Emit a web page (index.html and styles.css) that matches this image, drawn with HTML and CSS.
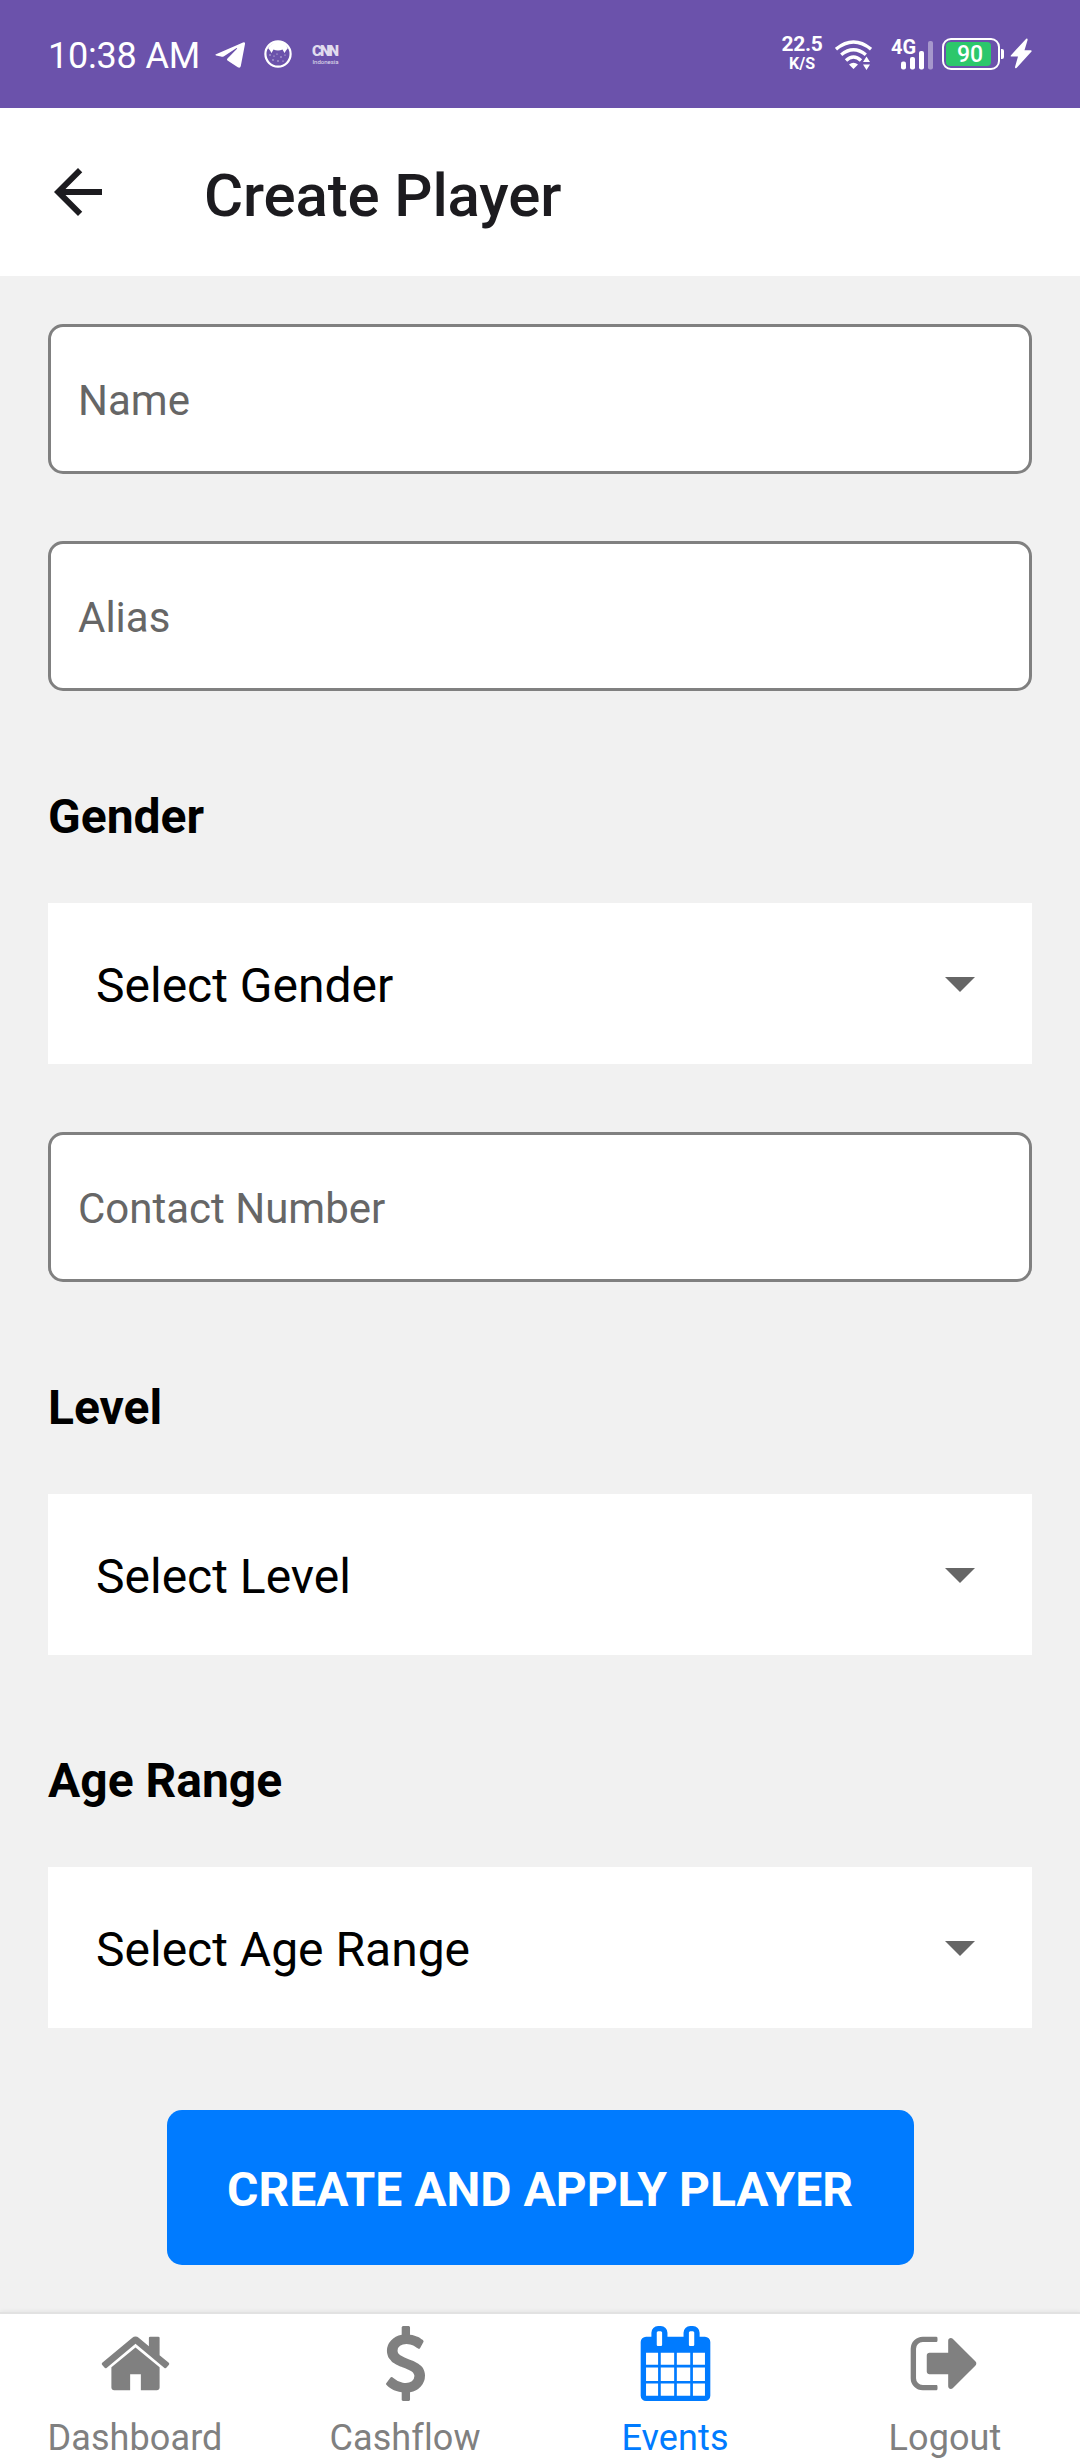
FILE: index.html
```html
<!DOCTYPE html>
<html lang="en">
<head>
<meta charset="utf-8">
<title>Create Player</title>
<link rel="stylesheet" href="styles.css">
</head>
<body>
<div class="screen">
  <div class="status">
    <div class="status-left">
      <span class="clock">10:38 AM</span>
      <svg class="telegram" width="30" height="27" viewBox="0 0 30 27"><path fill="#fff" d="M1 12.200 28 .5q2.400-.7 2 1.500L25.800 24q-.6 2.700-3 1.300L12.500 18.500q-1-1 0-2l9.500-9.700q.4-1-.8-.6L9 14.200q-1.500.9-3 .4L1 13.400q-1.200-.6 0-1.200z"/></svg>
      <svg class="face" width="28" height="28" viewBox="0 0 28 28"><circle cx="14" cy="14" r="12.600" fill="none" stroke="#fff" stroke-width="2.200"/><path fill="#fff" d="M4 8Q8 2 14 1.500T24 8L22 10.500 20.500 13 18.500 9.500q-4.500 2-9 0L7.500 13 6 10.500z"/><g fill="#fff" opacity=".8"><circle cx="6" cy="15" r=".7"/><circle cx="10" cy="16" r=".6"/><circle cx="13" cy="14" r=".6"/><circle cx="17" cy="17" r=".7"/><circle cx="21" cy="15" r=".6"/><circle cx="14" cy="21" r=".7"/><circle cx="19" cy="21" r=".6"/><circle cx="9" cy="20" r=".7"/></g></svg>
      <span class="cnn"><b>CNN</b><i>Indonesia</i></span>
    </div>
    <div class="status-right">
      <div class="speed"><span class="rate">22.5</span><span class="unit">K/S</span></div>
      <svg class="wifi" width="37" height="31" viewBox="0 0 37 31"><g fill="none" stroke="#fff" stroke-width="3.400"><path d="M1 9.200Q18.500-5 36 9.200"/><path d="M6.200 14.800Q18.500 4.800 30.800 14.800"/><path d="M11 20.400Q18.500 13.500 26 20.400"/></g><path fill="#fff" d="M14 24.500q4.500-3.500 9 0L18.500 29zM28 22l3.500-5.500L35 22zM28 24.500h7L31.500 30z"/></svg>
      <div class="cell"><span class="net">4G</span>
        <svg class="bars" width="33" height="30" viewBox="0 0 33 30"><g fill="#fff"><rect x="0" y="21.500" width="5" height="8" rx="2"/><rect x="9" y="17" width="5" height="12.500" rx="2"/><rect x="18" y="11" width="5" height="18.500" rx="2"/><rect x="27" y="1" width="5" height="28.500" rx="2" opacity=".4"/></g></svg>
      </div>
      <div class="battery"><span class="charge">90</span></div>
      <i class="nub"></i>
      <svg class="bolt" width="22" height="31" viewBox="0 0 22 31"><path fill="#fff" d="M16.200.7 1 17.200q-1 1.200.6 1.300H8L5 29q0 2 1.500 1L21.300 13.800q1-1.300-.6-1.500H14.500L17.600 2q.1-2-1.400-1.300z"/></svg>
    </div>
  </div>

  <header class="appbar">
    <svg class="back" width="72" height="72" viewBox="0 0 24 24"><path fill="#1c1b1f" d="M20 11H7.830l5.590-5.590L12 4l-8 8 8 8 1.410-1.410L7.830 13H20z"/></svg>
    <h1 class="title">Create Player</h1>
  </header>

  <main class="form">
    <input class="field" placeholder="Name">
    <input class="field" placeholder="Alias">
    <div class="group">
      <h2 class="label">Gender</h2>
      <div class="select"><span>Select Gender</span><svg width="30" height="15" viewBox="0 0 30 15"><path fill="#666" d="M0 0h30L15 15z"/></svg></div>
    </div>
    <input class="field" placeholder="Contact Number">
    <div class="group">
      <h2 class="label">Level</h2>
      <div class="select"><span>Select Level</span><svg width="30" height="15" viewBox="0 0 30 15"><path fill="#666" d="M0 0h30L15 15z"/></svg></div>
    </div>
    <div class="group">
      <h2 class="label">Age Range</h2>
      <div class="select"><span>Select Age Range</span><svg width="30" height="15" viewBox="0 0 30 15"><path fill="#666" d="M0 0h30L15 15z"/></svg></div>
    </div>
    <button class="submit">CREATE AND APPLY PLAYER</button>
  </main>

  <nav class="tabs">
    <a class="tab"><svg viewBox="0 0 1792 1792"><path d="M1472 992v480q0 26-19 45t-45 19h-384v-384h-256v384h-384q-26 0-45-19t-19-45v-480q0-1 .5-3t.5-3l575-474 575 474q1 2 1 6zm223-69l-62 74q-8 9-21 11h-3q-13 0-21-7l-692-577-692 577q-12 8-24 7-13-2-21-11l-62-74q-8-10-7-23.500t11-21.500l719-599q32-26 76-26t76 26l244 204v-195q0-14 9-23t23-9h192q14 0 23 9t9 23v408l219 182q10 8 11 21.500t-7 23.500z"/></svg><span>Dashboard</span></a>
    <a class="tab"><svg viewBox="0 0 1792 1792"><path d="M1362 1185q0 153-99.500 263.500t-258.500 136.500v175q0 14-9 23t-23 9h-135q-13 0-22.500-9.500t-9.500-22.500v-175q-66-9-127.500-31t-101.500-44.500-74-48-46.500-37.500-17.500-18q-17-21-2-41l103-135q7-10 23-12 15-2 24 9l2 2q113 99 243 125 37 8 74 8 81 0 142.500-43t61.500-122q0-28-15-53t-33.500-42-58.500-37.500-66-32-80-32.500q-39-16-61.500-25t-61.500-26.500-62.500-31-56.500-35.500-53.500-42.500-43.500-49-35.500-58-21-66.500-8.500-78q0-138 98-242t255-134v-180q0-13 9.500-22.500t22.500-9.500h135q14 0 23 9t9 23v176q57 6 110.500 23t87 33.500 63.500 37.500 39 29 15 14q17 18 5 38l-81 146q-8 15-23 16-14 3-27-7-3-3-14.500-12t-39-26.500-58.500-32-74.500-26-85.500-11.500q-95 0-155 43t-60 111q0 26 8.500 48t29.500 41.500 39.500 33 56 31 60.500 27 70 27.500q53 20 81 31.500t76 35 75.500 42.500 62 50 53 63.500 31.500 76.500 13 94z"/></svg><span>Cashflow</span></a>
    <a class="tab active"><svg viewBox="0 0 1792 1792"><path d="M192 1664h288v-288h-288v288zm352 0h320v-288h-320v288zm-352-352h288v-320h-288v320zm352 0h320v-320h-320v320zm-352-384h288v-288h-288v288zm736 736h320v-288h-320v288zm-384-736h320v-288h-320v288zm768 736h288v-288h-288v288zm-384-352h320v-320h-320v320zm-352-864v-288q0-13-9.500-22.500t-22.500-9.500h-64q-13 0-22.500 9.500t-9.500 22.500v288q0 13 9.500 22.500t22.500 9.500h64q13 0 22.500-9.500t9.500-22.500zm736 864h288v-320h-288v320zm-384-384h320v-288h-320v288zm384 0h288v-288h-288v288zm32-480v-288q0-13-9.500-22.500t-22.500-9.500h-64q-13 0-22.500 9.500t-9.500 22.500v288q0 13 9.500 22.500t22.500 9.500h64q13 0 22.500-9.500t9.500-22.500zm384-64v1280q0 52-38 90t-90 38h-1408q-52 0-90-38t-38-90v-1280q0-52 38-90t90-38h128v-96q0-66 47-113t113-47h64q66 0 113 47t47 113v96h384v-96q0-66 47-113t113-47h64q66 0 113 47t47 113v96h128q52 0 90 38t38 90z"/></svg><span>Events</span></a>
    <a class="tab"><svg viewBox="0 0 1792 1792"><path d="M704 1440q0 4 1 20t.5 26.500-3 23.500-10 19.500-20.500 6.500h-320q-119 0-203.500-84.500t-84.500-203.500v-704q0-119 84.500-203.500t203.500-84.500h320q13 0 22.500 9.500t9.500 22.500q0 4 1 20t.5 26.500-3 23.500-10 19.500-20.500 6.500h-320q-66 0-113 47t-47 113v704q0 66 47 113t113 47h312l11.500 1 11.500 3 8 5.500 7 9 2 13.500zm928-544q0 26-19 45l-544 544q-19 19-45 19t-45-19-19-45v-288h-448q-26 0-45-19t-19-45v-384q0-26 19-45t45-19h448v-288q0-26 19-45t45-19 45 19l544 544q19 19 19 45z"/></svg><span>Logout</span></a>
  </nav>
</div>
</body>
</html>
```
FILE: styles.css
```css
* { box-sizing: border-box; }
body { margin: 0; font-family: Roboto, sans-serif; background: #f1f1f1; }
svg { display: block; flex: none; }
.screen { width: 1080px; height: 2460px; display: flex; flex-direction: column; overflow: hidden; }

.status { height: 108px; flex: none; display: flex; justify-content: space-between; background: #6b52ab; color: #fff; padding: 0 48px 0 48px; }
.status-left, .status-right { display: flex; align-items: flex-start; }
.clock { font-size: 36px; line-height: 42px; margin-top: 35px; width: 152px; letter-spacing: -.2px; white-space: nowrap; }
.telegram { margin: 42px 0 0 15px; }
.face { margin: 40px 0 0 19px; }
.cnn { display: flex; flex-direction: column; width: 27px; margin: 45px 0 0 20px; align-items: center; opacity: .8; }
.cnn b { font-size: 15px; line-height: 13px; font-weight: 900; letter-spacing: -2px; margin-left: -2px; }
.cnn i { font-size: 6px; line-height: 7px; font-style: normal; }

.speed { width: 40px; display: flex; flex-direction: column; align-items: center; margin-top: 34px; font-weight: 700; }
.rate { font-size: 21px; line-height: 21px; letter-spacing: -.3px; }
.unit { font-size: 16px; line-height: 17px; }
.wifi { margin: 40px 0 0 13px; }
.cell { position: relative; width: 44px; height: 108px; margin-left: 19px; }
.net { position: absolute; left: 0; top: 37px; font-size: 20px; line-height: 20px; font-weight: 700; }
.bars { position: absolute; left: 10px; top: 40px; }
.battery { width: 58px; height: 32px; margin: 38px 0 0 7px; padding: 2px; border: 2px solid #fff; border-radius: 9px; display: flex; }
.charge { width: 45px; height: 24px; padding-left: 3px; border-radius: 4px; background: #2cc76b; font-size: 23px; line-height: 25px; font-weight: 500; text-align: center; }
.nub { width: 3px; height: 10px; margin: 49px 0 0 1px; background: #fff; border-radius: 0 2px 2px 0; }
.bolt { margin: 38px 0 0 6px; }

.appbar { height: 168px; flex: none; display: flex; background: #fff; padding-left: 42px; }
.back { margin-top: 48px; }
.title { margin: 52px 0 0 90px; font-size: 60px; line-height: 72px; font-weight: 500; letter-spacing: -.15px; color: #1c1b1f; white-space: nowrap; }

.form { flex: 1; display: flex; flex-direction: column; padding: 48px 48px 0; }
.field { width: 984px; height: 150px; flex: none; margin: 0 0 67px; padding: 2px 27px 0; border: 3px solid #808080; border-radius: 15px; background: #fff; font: 42px/50px Roboto, sans-serif; }
.field::placeholder { color: #666; opacity: 1; }
.group { margin-bottom: 68px; }
.group + .group { margin-top: -1px; }
.label { margin: 0; padding-top: 31px; height: 145px; font-size: 48px; line-height: 56px; font-weight: 700; color: #000; }
.select { height: 161px; display: flex; align-items: center; justify-content: space-between; padding: 4px 57px 0 48px; background: #fff; font-size: 48px; line-height: 56px; color: #000; }
.select svg { margin-bottom: 2px; }
.submit { width: 747px; height: 155px; flex: none; align-self: center; margin-top: 14px; padding: 4px 0 0; border: 0; border-radius: 15px; background: #007bff; color: #fff; font: 700 48px/56px Roboto, sans-serif; white-space: nowrap; }

.tabs { height: 148px; flex: none; display: grid; grid-template-columns: repeat(4, 1fr); background: #fff; border-top: 2px solid #e2e2e2; box-shadow: 0 -1px 4px rgba(0, 0, 0, .05); }
.tab { display: flex; flex-direction: column; align-items: center; padding-top: 11.5px; color: #808080; font-size: 36px; line-height: 42px; letter-spacing: .1px; }
.tab svg { width: 75px; height: 75px; fill: currentColor; }
.tab span { margin-top: 16.5px; }
.tab.active { color: #007bff; }
```
